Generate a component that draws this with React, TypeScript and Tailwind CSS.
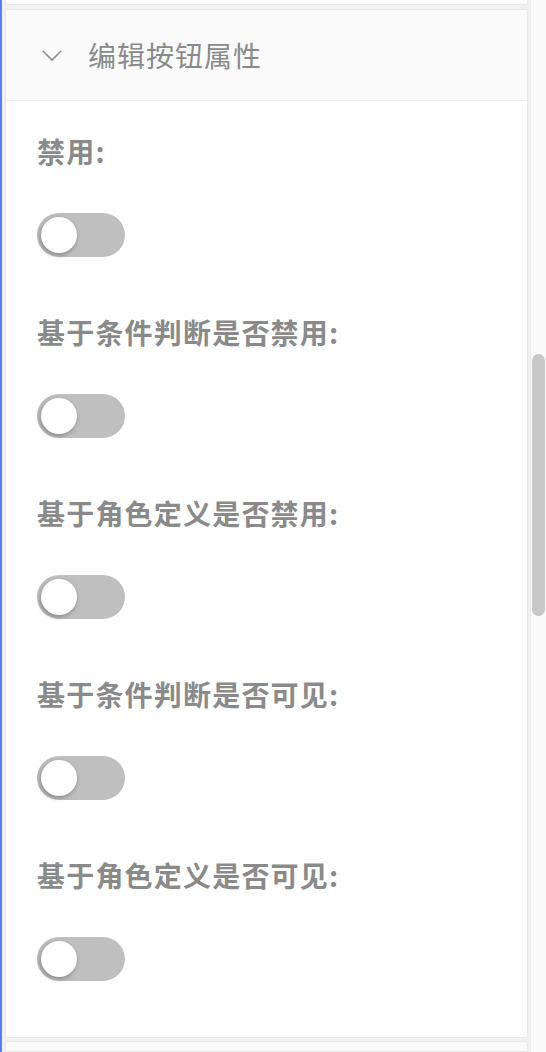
import React from "react";

const labels = [
  "禁用:",
  "基于条件判断是否禁用:",
  "基于角色定义是否禁用:",
  "基于条件判断是否可见:",
  "基于角色定义是否可见:",
];

function Toggle() {
  return (
    <div className="w-[88px] h-[44px] rounded-full bg-[#bfbfbf] flex items-center pl-[4px]">
      <div className="w-[36px] h-[36px] rounded-full bg-white shadow-[-1px_2px_5px_rgba(0,0,0,0.3)]" />
    </div>
  );
}

export default function App() {
  return (
    <div
      className="w-[546px] h-[1052px] overflow-hidden flex bg-[#f0f0f0]"
      style={{ fontFamily: '"Noto Sans CJK SC", "Noto Sans", sans-serif' }}
    >
      <div className="w-[2px] shrink-0 bg-[#5b7cf6]" />
      <div className="w-[528px] shrink-0 flex flex-col pl-[3px] pr-[2px]">
        <div className="h-[5px] shrink-0 bg-white border-x border-b border-[#e9e9e9] rounded-b-[3px]" />
        <div className="mt-[4px] shrink-0 border border-[#e9e9e9] rounded-[3px] bg-white flex flex-col">
          <div className="h-[91px] bg-[#fafafa] border-b border-[#ececec] flex items-center pl-[35px]">
            <svg width="22" height="14" viewBox="0 0 22 14" className="mr-[25px]">
              <polyline points="2,3 11,12 20,3" fill="none" stroke="#8c8c8c" strokeWidth="1.6" />
            </svg>
            <span className="text-[28px] leading-[40px] tracking-[1px] text-[#8a8a8a]">编辑按钮属性</span>
          </div>
          <div className="flex flex-col gap-[55px] pt-[30px] pb-[56px] pl-[31px]">
            {labels.map((l) => (
              <div key={l} className="flex flex-col gap-[42px]">
                <div className="text-[28px] leading-[40px] tracking-[1.2px] font-bold text-[#8a8a8a]">{l}</div>
                <Toggle />
              </div>
            ))}
          </div>
        </div>
        <div className="mt-[3px] flex-1 bg-[#fafafa] border border-[#e9e9e9] rounded-t-[3px]" />
      </div>
      <div className="flex-1 bg-[#fafafa] border-l border-[#ebebeb] pt-[354px] pl-[1px] pr-[1px]">
        <div className="h-[262px] rounded-full bg-[#c8c8c8]" />
      </div>
    </div>
  );
}
